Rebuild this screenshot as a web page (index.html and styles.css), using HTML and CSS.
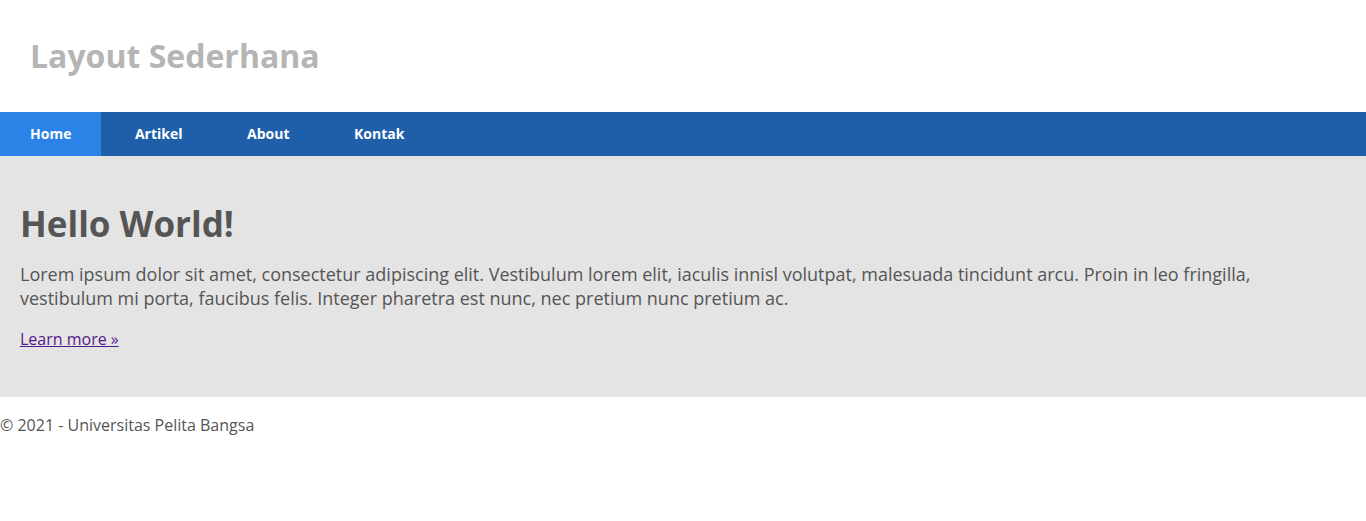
FILE: index.html
```html
<!DOCTYPE html>
<html lang="id">
<head>
<meta charset="utf-8">
<title>Layout Sederhana</title>
<link rel="stylesheet" href="styles.css">
</head>
<body>
<header class="site-header">
  <h1 class="site-title">Layout Sederhana</h1>
</header>
<nav class="main-nav">
  <a class="nav-item active" href="#">Home</a>
  <a class="nav-item" href="#">Artikel</a>
  <a class="nav-item" href="#">About</a>
  <a class="nav-item" href="#">Kontak</a>
</nav>
<section class="hero">
  <h2 class="hero-title">Hello World!</h2>
  <p class="hero-text">Lorem ipsum dolor sit amet, consectetur adipiscing elit. Vestibulum lorem elit, iaculis innisl volutpat, malesuada tincidunt arcu. Proin in leo fringilla, vestibulum mi porta, faucibus felis. Integer pharetra est nunc, nec pretium nunc pretium ac.</p>
  <p class="hero-link"><a href="#">Learn more &raquo;</a></p>
</section>
<footer class="site-footer">
  <p>&copy; 2021 - Universitas Pelita Bangsa</p>
</footer>
</body>
</html>
```

FILE: styles.css
```css
* { box-sizing: border-box; }
html, body {
  margin: 0;
  padding: 0;
  background: #ffffff;
  font-family: "Open Sans", "Liberation Sans", sans-serif;
  color: #555555;
}
.site-header {
  height: 112px;
  padding: 34px 30px 0;
}
.site-title {
  margin: 0;
  font-size: 32px;
  font-weight: 700;
  color: #b5b5b5;
  line-height: normal;
}
.main-nav {
  display: flex;
  gap: 4.5px;
  height: 44px;
  background: #1f5faa;
}
.nav-item {
  display: flex;
  align-items: center;
  padding: 0 30px 2px;
  color: #ffffff;
  font-size: 14px;
  font-weight: 700;
  text-decoration: none;
}
.nav-item.active {
  background: #2b83e8;
  margin-right: -0.5px;
  padding-right: 29.5px;
}
.hero {
  background: #e4e4e4;
  padding: 44px 20px 31px;
}
.hero-title {
  margin: 0 0 15px;
  font-size: 35px;
  font-weight: 700;
  color: #555555;
  line-height: normal;
}
.hero-text {
  margin: 0 0 18px;
  font-size: 18px;
  line-height: normal;
}
.hero-link {
  margin: 0 0 16px;
  font-size: 16px;
  line-height: normal;
}
.hero-link a {
  color: #551a8b;
}
.site-footer {
  padding-top: 17px;
}
.site-footer p {
  margin: 0;
  font-size: 16px;
  line-height: normal;
}
```
